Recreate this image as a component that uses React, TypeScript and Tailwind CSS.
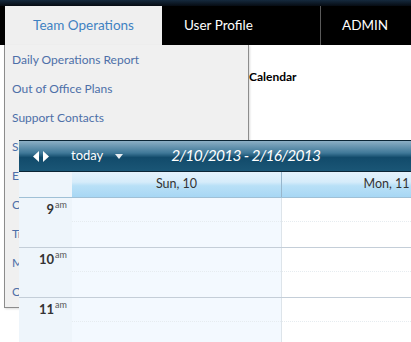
import { useMemo } from 'react';

const menuItems = [
  'Daily Operations Report',
  'Out of Office Plans',
  'Support Contacts',
  'Shift Schedules',
  'Escalation Procedures',
  'On-Call Rotation',
  'Training Materials',
  'Meeting Notes',
  'Other Resources',
];

const days = ['Sun, 10', 'Mon, 11'];
const hours = ['9', '10', '11'];

function TopNav() {
  return (
    <div className="bg-black">
      <div className="h-[6px] bg-[linear-gradient(to_bottom,#15293d,#060b12)]" />
      <div className="flex h-[39px] items-stretch text-[13.5px]">
        <div className="ml-[5px] flex w-[157px] items-center justify-center bg-[#efefef] text-[#3f82c2]">
          Team Operations
        </div>
        <div className="flex w-[158px] items-center pl-[22px] text-white">User Profile</div>
        <div className="w-px bg-[#5a5a5a]" />
        <div className="flex items-center pl-[21px] text-white">ADMIN</div>
      </div>
    </div>
  );
}

function DropdownMenu() {
  return (
    <div className="absolute left-[4px] top-[45px] z-10 w-[245px] border-x border-b border-[#8c8c8c] bg-[#f0f0f0] pb-[1px] shadow-[1px_1px_2px_rgba(0,0,0,0.15)]">
      {menuItems.map((item) => (
        <div key={item} className="flex h-[29px] items-center pl-[7px] text-[12px] text-[#4d6fa8] whitespace-nowrap">
          {item}
        </div>
      ))}
    </div>
  );
}

function TimeRow({ hour }: { hour: string }) {
  return (
    <div className="flex h-[50px] border-b border-[#c4ced8]">
      <div className="flex w-[53px] shrink-0 items-start justify-end bg-[#eef5fb] pr-[5px] pt-[2px] text-[#333]">
        <span className="mt-[2px] text-[13px] font-bold leading-[15px]">{hour}</span>
        <span className="ml-[1px] text-[9px] leading-[10px] text-[#555]">am</span>
      </div>
      {days.map((d, i) => (
        <div
          key={d}
          className={`w-[210px] shrink-0 border-r border-[#dde4ea] ${i === 0 ? 'bg-[#f3f9ff]' : 'bg-white'}`}
        >
          <div className="h-[24px] border-b border-dotted border-[#e6ecf0]" />
        </div>
      ))}
    </div>
  );
}

function WeekCalendar() {
  const range = useMemo(() => '2/10/2013 - 2/16/2013', []);
  return (
    <div className="relative z-20 ml-[19px] w-[473px]">
      <div className="flex h-[32px] items-center border-y border-[#0b2535] bg-[linear-gradient(to_bottom,#8cafc5_0%,#3f7898_40%,#124b6b_55%,#1a5676_100%)] text-white">
        <div className="ml-[14px] flex items-center gap-[1px]">
          <svg width="7" height="11" viewBox="0 0 7 11">
            <path d="M6 0 L0 5.5 L6 11 Z" fill="white" />
          </svg>
          <svg width="7" height="11" viewBox="0 0 7 11" className="ml-[1px]">
            <path d="M1 0 L7 5.5 L1 11 Z" fill="white" />
          </svg>
        </div>
        <span className="ml-[22px] text-[13px]">today</span>
        <svg width="8" height="5" viewBox="0 0 8 5" className="ml-[12px] mt-[1px]">
          <path d="M0 0 H8 L4 5 Z" fill="#e8eef2" />
        </svg>
        <span className="ml-[48px] text-[15.5px] italic tracking-[-0.7px]">{range}</span>
      </div>
      <div className="flex h-[26px] border-b border-[#9fc0d6]">
        <div className="w-[53px] shrink-0 bg-[#eef5fb]" />
        {days.map((d) => (
          <div
            key={d}
            className="flex w-[210px] shrink-0 items-center justify-center border-r border-[#97b6cc] bg-[linear-gradient(to_bottom,#e4f2fc_0%,#d6ecfa_40%,#b9e0f7_55%,#a7d7f4_100%)] text-[12.5px] text-[#333]"
          >
            {d}
          </div>
        ))}
      </div>
      {hours.map((h) => (
        <TimeRow key={h} hour={h} />
      ))}
    </div>
  );
}

export default function App() {
  return (
    <div className="relative h-[342px] w-[411px] overflow-hidden bg-white font-['Lato',sans-serif]">
      <TopNav />
      <DropdownMenu />
      <div className="pt-[23px]">
        <div className="ml-[249px] text-[12px] font-bold text-black">Calendar</div>
      </div>
      <div className="mt-[54px]">
        <WeekCalendar />
      </div>
    </div>
  );
}
